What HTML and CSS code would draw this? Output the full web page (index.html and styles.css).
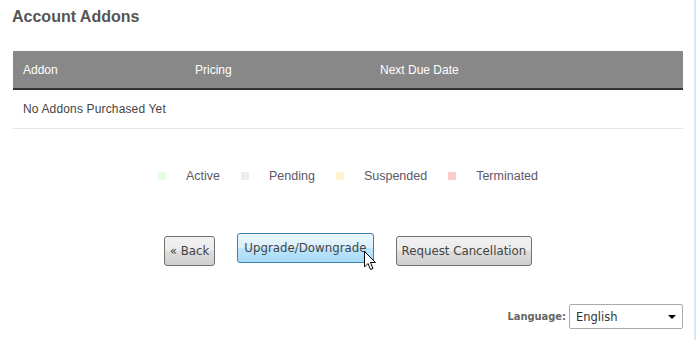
FILE: index.html
```html
<!DOCTYPE html>
<html>
<head>
<meta charset="utf-8">
<link rel="stylesheet" href="styles.css">
</head>
<body>
<div class="page">
  <div class="content">
    <h2 class="title">Account Addons</h2>
    <table class="addons">
      <thead>
        <tr>
          <th class="c1">Addon</th>
          <th class="c2">Pricing</th>
          <th class="c3">Next Due Date</th>
          <th></th>
        </tr>
      </thead>
      <tbody>
        <tr><td colspan="4">No Addons Purchased Yet</td></tr>
      </tbody>
    </table>
    <div class="legend">
      <span class="item"><i class="sq active"></i>Active</span>
      <span class="item"><i class="sq pending"></i>Pending</span>
      <span class="item"><i class="sq suspended"></i>Suspended</span>
      <span class="item"><i class="sq terminated"></i>Terminated</span>
    </div>
    <div class="buttons">
      <button class="btn">« Back</button>
      <button class="btn hover">Upgrade/Downgrade<svg class="cursor" width="13" height="20" viewBox="0 0 13 20"><path d="M0.5 0.5 L0.5 16 L4 12.5 L6.5 18.5 L9 17.5 L6.5 11.5 L11.5 11.5 Z" fill="#fff" stroke="#000" stroke-width="1" stroke-linejoin="miter"/></svg></button>
      <button class="btn">Request Cancellation</button>
    </div>
    <div class="lang">
      <label class="lang-label">Language:</label>
      <div class="select"><span>English</span><i class="caret"></i></div>
    </div>
  </div>
</div>
</body>
</html>
```
FILE: styles.css
```css
html, body { margin: 0; padding: 0; background: #fff; }
.page {
  width: 696px;
  height: 340px;
  border-right: 2px solid #d4e8fb;
  box-sizing: border-box;
  font-family: "Liberation Sans", Arial, sans-serif;
}
.content { width: 670px; margin-left: 13px; padding-top: 7px; }
.title {
  margin: 0 0 0 -1px;
  font-size: 16px;
  line-height: 20px;
  font-weight: bold;
  color: #555;
}
.addons {
  margin-top: 24px;
  width: 670px;
  border-collapse: collapse;
  font-size: 12px;
  font-family: "Liberation Sans", Arial, sans-serif;
}
.addons th {
  background: #888;
  color: #fff;
  font-weight: normal;
  text-align: left;
  height: 38px;
  padding: 0 0 0 10px;
  border-bottom: 2px solid #333;
  box-sizing: border-box;
}
.addons .c1 { width: 172px; }
.addons .c2 { width: 185px; }
.addons .c3 { width: 200px; }
.addons td {
  color: #444;
  height: 38px;
  padding: 0 0 0 10px;
  border-bottom: 1px solid #e6e6e6;
  letter-spacing: 0.15px;
}
.legend {
  display: flex;
  justify-content: center;
  gap: 21px;
  margin-top: 40px;
  font-size: 12.5px;
  color: #5c5866;
  line-height: 14px;
}
.legend .item { display: flex; align-items: center; gap: 20px; }
.sq { display: inline-block; width: 8px; height: 8px; }
.sq.active { background: #dfd; }
.sq.pending { background: #eee; }
.sq.suspended { background: #fff5cc; }
.sq.terminated { background: #fcc; }
.buttons {
  display: flex;
  justify-content: center;
  align-items: flex-start;
  gap: 22px;
  margin-top: 50px;
  padding-left: 0;
}
.btn {
  position: relative;
  font-family: "DejaVu Sans", Tahoma, sans-serif;
  font-size: 11.8px;
  color: #444;
  height: 30px;
  padding: 0 5px;
  border: 1px solid #707070;
  border-radius: 3px;
  background: linear-gradient(#f2f2f2 0%, #ebebeb 50%, #dddddd 51%, #cfcfcf 100%);
  margin-top: 3px;
}
.btn.hover {
  margin-top: 0;
  padding: 0 6px;
  border-color: #3c7fb1;
  background: linear-gradient(#eaf6fd 0%, #d9f0fc 50%, #bee6fd 51%, #a7d9f5 100%);
}
.cursor { position: absolute; left: 126px; top: 17px; }
.lang {
  display: flex;
  justify-content: flex-end;
  align-items: center;
  gap: 3px;
  margin-top: 38px;
  font-family: "DejaVu Sans", Tahoma, sans-serif;
  font-size: 11.5px;
  color: #555;
}
.lang-label { font-family: "DejaVu Sans Condensed", "DejaVu Sans", sans-serif; font-weight: bold; color: #666; font-size: 11px; }
.select {
  width: 114px;
  height: 25px;
  box-sizing: border-box;
  border: 1px solid #aaa;
  border-radius: 2px;
  display: flex;
  align-items: center;
  justify-content: space-between;
  padding: 0 6px 0 6px;
  color: #333;
}
.caret {
  width: 0; height: 0;
  border-left: 4px solid transparent;
  border-right: 4px solid transparent;
  border-top: 4px solid #000;
}
```
